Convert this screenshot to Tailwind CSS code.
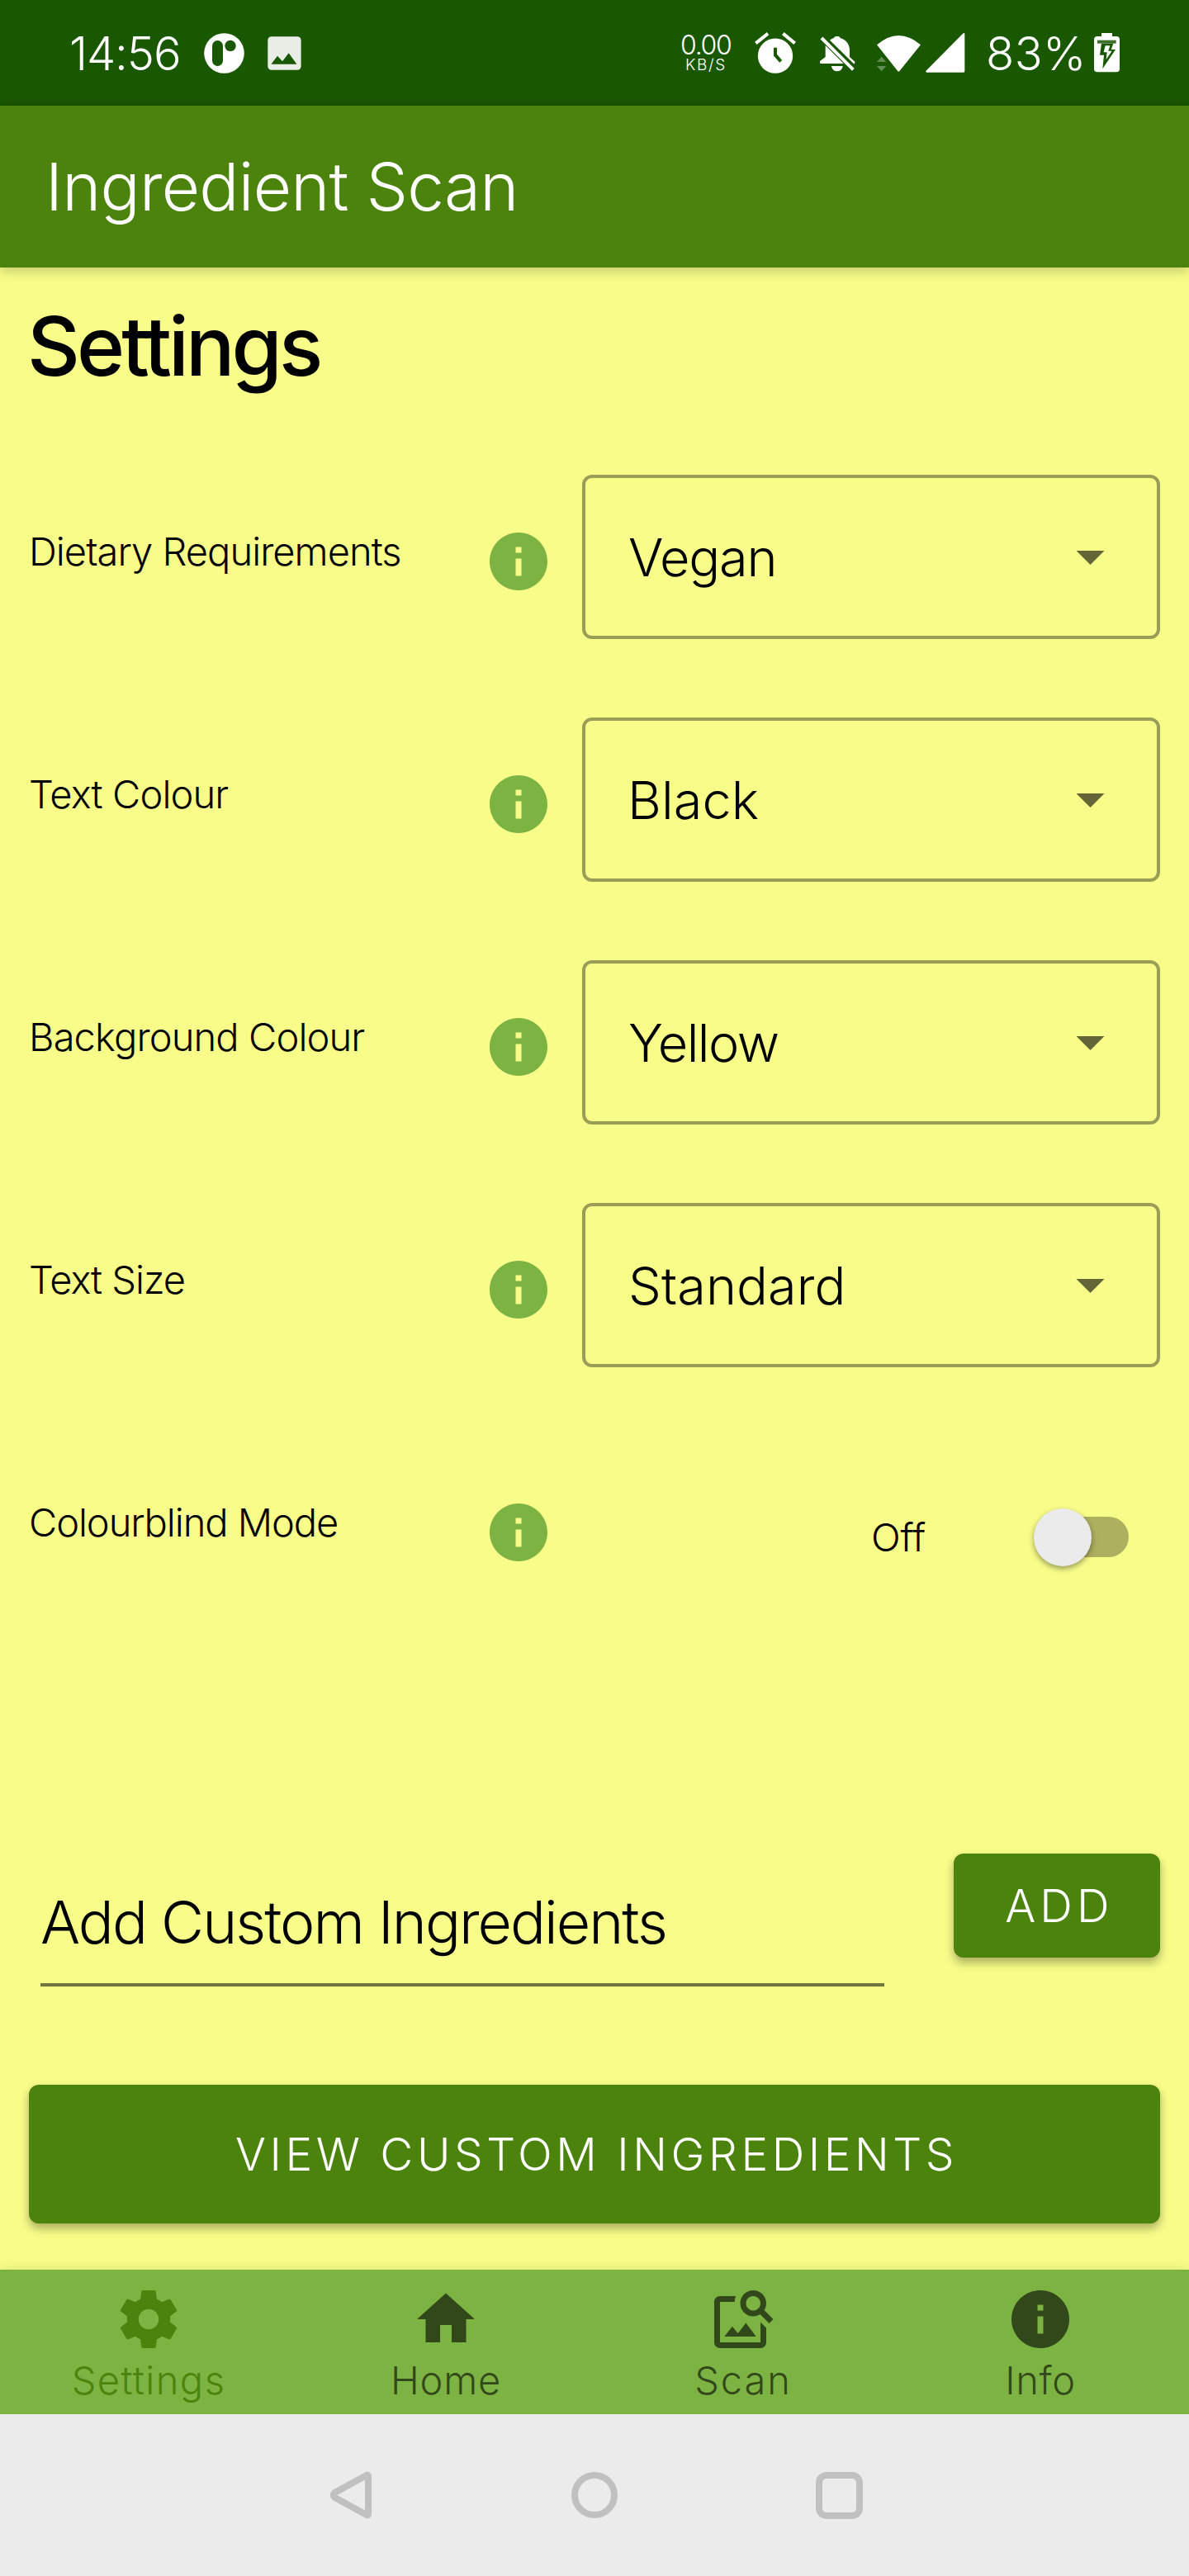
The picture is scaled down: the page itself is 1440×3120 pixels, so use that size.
<!DOCTYPE html>
<html lang="en">
<head>
<meta charset="utf-8">
<title>Ingredient Scan</title>
<script src="https://cdn.jsdelivr.net/npm/@tailwindcss/browser@4"></script>
</head>
<body class="w-[1440px] h-[3120px] flex flex-col overflow-hidden bg-[#f8fd89] font-['Inter',sans-serif] font-light leading-none text-black whitespace-nowrap">

  <!-- Status bar -->
  <div class="h-32 shrink-0 flex items-center justify-between bg-[#195700] text-white pl-[84px] pr-[84px]">
    <div class="flex items-center">
      <span class="w-[163px] text-[56px] leading-none tracking-[-1.07px] pt-px">14:56</span>
      <svg class="w-[49px] h-[49px]" viewBox="0 0 49 49"><circle cx="24.5" cy="24.5" r="24.3" fill="#fff"/><rect x="10" y="9" width="13" height="31" rx="6.5" fill="#195700"/><circle cx="32" cy="15.4" r="6.7" fill="#195700"/></svg>
      <svg class="w-[41px] h-[41px] ml-7" viewBox="0 0 41 41"><rect x=".3" y=".2" width="40.3" height="40.6" rx="4.5" fill="#e8ede5"/><path d="M4.4 33.7 12 23.7l6 6.6 7.7-10 9.7 13.4z" fill="#195700"/></svg>
    </div>
    <div class="flex items-center">
      <div class="w-[91px] flex flex-col">
        <span class="text-[32px] leading-[29px] tracking-[-1.3px] pl-px">0.00</span>
        <span class="text-[19px] leading-5 tracking-[1.7px] pl-[7px]">KB/S</span>
      </div>
      <svg class="w-[50px] h-[50px]" viewBox="42 45 150 150"><circle cx="117" cy="131" r="63.5" fill="#fff"/><path d="M46 85 90 50M145 50l43 35" stroke="#fff" stroke-width="12"/><path d="M117 101v27l20 23" fill="none" stroke="#195700" stroke-width="12"/></svg>
      <svg class="w-[43px] h-[43px] ml-[29px] mt-[2px]" viewBox="279 59 129 129" fill="#fff"><path d="M299 92l66 66H283q-4 0-4-4v-5l20-15zM315 73q7-6 15-8c2-8 21-8 23 0 20 6 34 22 34 43v26l19 17v4q0 4-4 4zM321 167h41a20.500 19 0 0 1-41 0z"/><path d="M285 65 400 180" stroke="#fff" stroke-width="12"/></svg>
      <svg class="w-[107px] h-12 ml-[26px]" viewBox="486 45 321 144" fill="#fff"><path d="M486 150l17-19 17 19zM486 165h34l-17 19z" opacity=".32"/><path d="M486 88Q565 20 645 88L569 182Q565 187 561 182Z" stroke="#195700" stroke-width="6" paint-order="stroke"/><path d="M799 46.500q6-4 6 3V184q0 4-4 4H667q-6-2-1-7z"/></svg>
      <span class="w-[131px] ml-[25px] text-[56px] leading-none tracking-[0.42px] pt-px">83%</span>
      <svg class="w-[31px] h-12" viewBox="1275 48 93 144"><path d="M1275 72q0-12 12-12h15V48h39v12h15q12 0 12 12v106q0 12-12 12h-69q-12 0-12-12z" fill="#fff"/><path d="M1287 74h68v12h-68z" fill="#3f7029"/><path d="M1302 86l-6 42h15l-5 50 47-70h-16l8-22z" fill="#195700"/><path d="M1316 94l-6 24h12l-3 26 21-31h-13l6-19z" fill="#fff"/></svg>
    </div>
  </div>

  <!-- App bar -->
  <header class="h-[196px] shrink-0 flex items-center bg-[#4b830d] text-white pl-[55px] shadow-[0_4px_14px_rgba(0,0,0,0.22)]">
    <div class="text-[80px] leading-none tracking-[-0.75px]">Ingredient Scan</div>
  </header>

  <main class="h-[2425px] shrink-0 px-[35px] pt-[46px]">
    <h1 class="-ml-0.5 h-[205px] text-[99px] leading-none font-medium tracking-[-3.94px]">Settings</h1>

    <!-- Preference rows -->
    <section class="flex flex-col gap-[95px]">
      <div class="h-[199px] flex items-start">
        <span class="w-[558px] pt-[69px] text-[47px] leading-none tracking-[-0.95px]">Dietary Requirements</span>
        <svg class="w-[70px] h-[70px] mt-[70px] fill-[#7cb342]" viewBox="2 2 20 20"><path d="M12 2C6.480 2 2 6.480 2 12s4.480 10 10 10 10-4.480 10-10S17.520 2 12 2zm1 15h-2v-6h2zm0-8h-2V7h2z"/></svg>
        <div class="w-[700px] h-[199px] ml-[42px] pl-[52px] pr-[63px] flex items-center justify-between border-4 border-black/38 rounded-xl">
          <span class="text-[63px] leading-none tracking-[-1.2px] pt-px">Vegan</span>
          <svg class="w-[35px] h-[17px] mt-0.5 fill-black/60" viewBox="0 0 10 5"><path d="M0 0l5 5 5-5z"/></svg>
        </div>
      </div>
      <div class="h-[199px] flex items-start">
        <span class="w-[558px] pt-[69px] text-[47px] leading-none tracking-[-0.86px]">Text Colour</span>
        <svg class="w-[70px] h-[70px] mt-[70px] fill-[#7cb342]" viewBox="2 2 20 20"><path d="M12 2C6.480 2 2 6.480 2 12s4.480 10 10 10 10-4.480 10-10S17.520 2 12 2zm1 15h-2v-6h2zm0-8h-2V7h2z"/></svg>
        <div class="w-[700px] h-[199px] ml-[42px] pl-[51px] pr-[63px] flex items-center justify-between border-4 border-black/38 rounded-xl">
          <span class="text-[63px] leading-none tracking-[0.1px] pt-px">Black</span>
          <svg class="w-[35px] h-[17px] mt-0.5 fill-black/60" viewBox="0 0 10 5"><path d="M0 0l5 5 5-5z"/></svg>
        </div>
      </div>
      <div class="h-[199px] flex items-start">
        <span class="w-[558px] pt-[69px] text-[47px] leading-none tracking-[-0.86px]">Background Colour</span>
        <svg class="w-[70px] h-[70px] mt-[70px] fill-[#7cb342]" viewBox="2 2 20 20"><path d="M12 2C6.480 2 2 6.480 2 12s4.480 10 10 10 10-4.480 10-10S17.520 2 12 2zm1 15h-2v-6h2zm0-8h-2V7h2z"/></svg>
        <div class="w-[700px] h-[199px] ml-[42px] pl-[52px] pr-[63px] flex items-center justify-between border-4 border-black/38 rounded-xl">
          <span class="text-[63px] leading-none tracking-[-1.5px] pt-px">Yellow</span>
          <svg class="w-[35px] h-[17px] mt-0.5 fill-black/60" viewBox="0 0 10 5"><path d="M0 0l5 5 5-5z"/></svg>
        </div>
      </div>
      <div class="h-[199px] flex items-start">
        <span class="w-[558px] pt-[69px] text-[47px] leading-none tracking-[-1px]">Text Size</span>
        <svg class="w-[70px] h-[70px] mt-[70px] fill-[#7cb342]" viewBox="2 2 20 20"><path d="M12 2C6.480 2 2 6.480 2 12s4.480 10 10 10 10-4.480 10-10S17.520 2 12 2zm1 15h-2v-6h2zm0-8h-2V7h2z"/></svg>
        <div class="w-[700px] h-[199px] ml-[42px] pl-[52px] pr-[63px] flex items-center justify-between border-4 border-black/38 rounded-xl">
          <span class="text-[63px] leading-none tracking-[0.1px] pt-px">Standard</span>
          <svg class="w-[35px] h-[17px] mt-0.5 fill-black/60" viewBox="0 0 10 5"><path d="M0 0l5 5 5-5z"/></svg>
        </div>
      </div>
      <div class="h-[199px] flex items-start">
        <span class="w-[558px] pt-[69px] text-[47px] leading-none tracking-[-1.06px]">Colourblind Mode</span>
        <svg class="w-[70px] h-[70px] mt-[70px] fill-[#7cb342]" viewBox="2 2 20 20"><path d="M12 2C6.480 2 2 6.480 2 12s4.480 10 10 10 10-4.480 10-10S17.520 2 12 2zm1 15h-2v-6h2zm0-8h-2V7h2z"/></svg>
        <span class="w-[197px] ml-[392px] pt-[87px] text-[47px] leading-none tracking-[-0.24px]">Off</span>
        <div class="w-[115px] h-[70px] mt-[76px] flex items-center">
          <div class="w-[70px] h-[70px] shrink-0 z-10 rounded-full bg-[#ebebeb] shadow-[0_3px_7px_rgba(0,0,0,0.4)]"></div>
          <div class="w-[94px] h-[49px] shrink-0 -ml-[49px] -mt-0.5 rounded-full bg-black/30"></div>
        </div>
      </div>
    </section>

    <!-- Custom ingredients -->
    <section class="mt-[295px] flex justify-between items-start">
      <div class="w-[1022px] h-[161px] ml-3.5 pt-12 border-b-4 border-black/54 text-[71.5px] leading-none tracking-[-1.97px]">Add Custom Ingredients</div>
      <div class="w-[250px] h-[126px] flex items-center justify-center rounded-xl bg-[#4b830d] text-white text-[55px] leading-none tracking-[5.2px] pl-[6px] shadow-[0_6px_12px_rgba(0,0,0,0.32)]">ADD</div>
    </section>
    <div class="h-[168px] mt-[119px] flex items-center justify-center rounded-xl bg-[#4b830d] text-white text-[55px] leading-none tracking-[4.53px] pl-[5px] shadow-[0_6px_12px_rgba(0,0,0,0.32)]">VIEW CUSTOM INGREDIENTS</div>
  </main>

  <!-- Bottom navigation -->
  <nav class="h-[175px] shrink-0 grid grid-cols-4 bg-[#7cb342] text-[47px] leading-none text-black/60 fill-black/60 shadow-[0_-2px_12px_rgba(0,0,0,0.1)]">
    <div class="flex flex-col items-center gap-2 pt-[18px] text-[#4b830d] fill-[#4b830d]">
      <svg class="w-[84px] h-[84px]" viewBox="0 0 24 24"><path d="M19.430 12.980c.04-.32.07-.64.07-.98s-.03-.66-.07-.98l2.110-1.650c.19-.15.24-.42.12-.64l-2-3.460c-.12-.22-.39-.3-.61-.22l-2.490 1c-.52-.4-1.080-.73-1.690-.98l-.38-2.650C14.460 2.180 14.250 2 14 2h-4c-.25 0-.46.18-.49.42l-.38 2.650c-.61.25-1.170.59-1.690.98l-2.490-1c-.23-.09-.49 0-.61.22l-2 3.460c-.13.22-.07.49.12.64l2.110 1.650c-.04.32-.07.65-.07.98s.03.66.07.98l-2.110 1.650c-.19.15-.24.42-.12.64l2 3.460c.12.22.39.3.61.22l2.490-1c.52.4 1.080.73 1.690.98l.38 2.650c.03.24.24.42.49.42h4c.25 0 .46-.18.49-.42l.38-2.650c.61-.25 1.170-.59 1.690-.98l2.490 1c.23.09.49 0 .61-.22l2-3.460c.12-.22.07-.49-.12-.64zM12 15.500c-1.930 0-3.500-1.570-3.500-3.500s1.570-3.500 3.500-3.500 3.500 1.570 3.500 3.500-1.570 3.500-3.500 3.500z"/></svg>
      <span class="tracking-[1.45px]">Settings</span>
    </div>
    <div class="flex flex-col items-center gap-2 pt-[18px]">
      <svg class="w-[84px] h-[84px]" viewBox="0 0 24 24"><path d="M10 20v-6h4v6h5v-8h3L12 3 2 12h3v8z"/></svg>
      <span class="tracking-[0.78px]">Home</span>
    </div>
    <div class="flex flex-col items-center gap-2 pt-[18px]">
      <svg class="w-[84px] h-[84px]" viewBox="0 0 24 24"><path d="M18 13v7H4V6h5.020c.05-.71.22-1.380.48-2H4c-1.100 0-2 .9-2 2v14c0 1.100.9 2 2 2h14c1.100 0 2-.9 2-2v-5l-2-2zm-1.500 5h-11l2.750-3.530 1.960 2.360 2.750-3.540zm2.800-9.110c.44-.7.7-1.510.7-2.390C20 4.010 17.990 2 15.500 2S11 4.010 11 6.500s2.010 4.500 4.490 4.500c.88 0 1.700-.26 2.390-.7L21 13.420 22.420 12 19.300 8.890zM15.500 9C14.120 9 13 7.880 13 6.500S14.120 4 15.500 4 18 5.120 18 6.500 16.880 9 15.500 9z"/></svg>
      <span class="tracking-[1.92px]">Scan</span>
    </div>
    <div class="flex flex-col items-center gap-2 pt-[18px]">
      <svg class="w-[84px] h-[84px]" viewBox="0 0 24 24"><path d="M12 2C6.480 2 2 6.480 2 12s4.480 10 10 10 10-4.480 10-10S17.520 2 12 2zm1 15h-2v-6h2zm0-8h-2V7h2z"/></svg>
      <span class="tracking-[0.66px]">Info</span>
    </div>
  </nav>

  <!-- System navigation -->
  <div class="h-[196px] shrink-0 flex items-center justify-center gap-[240px] pl-[3px] bg-[#ebebeb]">
    <svg class="w-[53px] h-[58px]" viewBox="0 0 53 58"><path d="M47 5.500v47Q46.500 54 45 53L6.500 32Q3 29 6.500 26L45 5Q46.500 4 47 5.500z" fill="none" stroke="#c0c0c0" stroke-width="8" stroke-linejoin="round"/></svg>
    <div class="w-14 h-14 rounded-full border-8 border-[#c0c0c0]"></div>
    <div class="w-[57px] h-[57px] rounded-[13px] border-8 border-[#c0c0c0]"></div>
  </div>
</body>
</html>
